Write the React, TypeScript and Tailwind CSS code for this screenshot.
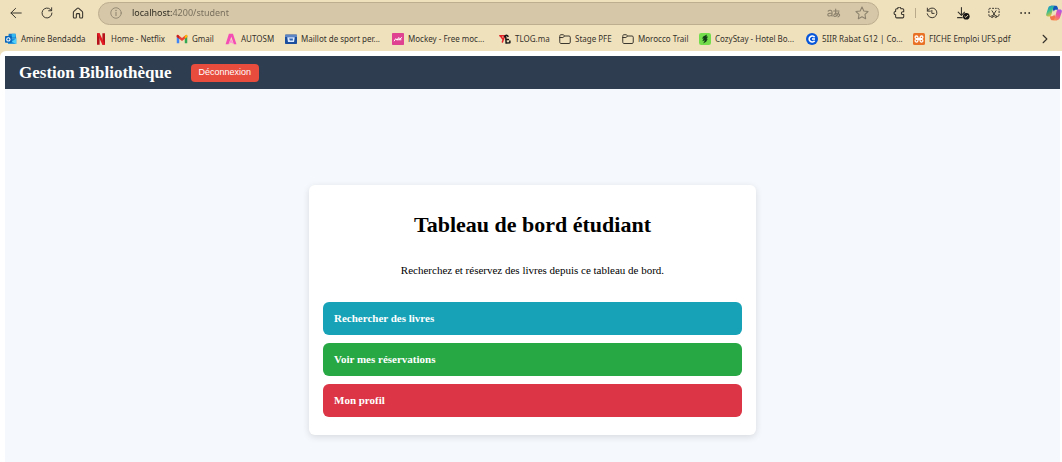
import type { ReactNode } from 'react';

type Bookmark = { label: string; icon: ReactNode; width: string };

const stroke = { fill: 'none', stroke: 'currentColor', strokeLinecap: 'round', strokeLinejoin: 'round' } as const;

function Icon({ children, className = 'size-3', box = 16 }: { children: ReactNode; className?: string; box?: number }) {
  return (
    <svg viewBox={`0 0 ${box} ${box}`} className={`shrink-0 ${className}`} aria-hidden="true">
      {children}
    </svg>
  );
}

const BackIcon = () => (
  <Icon>
    <path {...stroke} strokeWidth="1.3" d="M15 8H1.5M7.5 1.8 1.2 8l6.3 6.2" />
  </Icon>
);

const ReloadIcon = () => (
  <Icon>
    <path {...stroke} strokeWidth="1.3" d="M14.6 8A6.6 6.6 0 1 1 12.8 3.5L14 4.8M14.2 1v4h-4" />
  </Icon>
);

const HomeIcon = () => (
  <Icon>
    <path {...stroke} strokeWidth="1.4" d="M1.8 7.3c0-.6.3-1.1.7-1.5L7 1.8c.6-.5 1.4-.5 2 0l4.5 4c.4.4.7.9.7 1.5v6c0 .8-.5 1.4-1.3 1.4h-1.5c-.7 0-1.2-.5-1.2-1.2V10c0-.7-.5-1.2-1.2-1.2H7c-.7 0-1.2.5-1.2 1.2v3.5c0 .7-.5 1.2-1.2 1.2H3.1c-.8 0-1.3-.6-1.3-1.4z" />
  </Icon>
);

const InfoIcon = () => (
  <Icon>
    <circle {...stroke} strokeWidth="1.1" cx="8" cy="8" r="7" />
    <path {...stroke} strokeWidth="1.3" d="M8 7.2v4.3" />
    <circle cx="8" cy="4.7" r=".9" fill="currentColor" />
  </Icon>
);

const TranslateIcon = () => (
  <svg viewBox="0 0 18 12" className="h-2.5 w-3.5 shrink-0" aria-hidden="true">
    <path {...stroke} strokeWidth="1.4" d="M1.5 3.5C3 2 6.500 2 6.500 5v5M6.500 6C3 6 1 6.500 1 8.300c0 2.200 4 2.300 5.500-.3M8.500 3.500h7M11.200 1c-.4 3-.2 6.500.8 9M15 5c-1 3-3 5.500-5 5.500-2.500 0-1.500-4 2.500-4.200 3.500-.2 5.500 3.200 1.500 4.700" />
  </svg>
);

const StarIcon = () => (
  <Icon className="size-3.5">
    <path {...stroke} strokeWidth="1.2" d="m8 1.200 2.100 4.400 4.800.7-3.500 3.400.8 4.800L8 12.200l-4.200 2.300.8-4.800L1.100 6.300l4.800-.7z" />
  </Icon>
);

const PuzzleIcon = () => (
  <Icon>
    <path {...stroke} strokeWidth="1.4" d="M5 2.200h1.300a2.100 2.100 0 0 1 4.200 0h2.300c.9 0 1.500.6 1.500 1.400v2.700h-1.200a1.900 1.900 0 0 0 0 3.800h1.200v2.900c0 .9-.6 1.500-1.500 1.500H5c-.9 0-1.500-.6-1.500-1.500v-2.700a2.200 2.200 0 0 1 0-4.400V3.700c0-.9.600-1.500 1.500-1.500z" />
  </Icon>
);

const HistoryIcon = () => (
  <Icon>
    <path {...stroke} strokeWidth="1.3" d="M1.800 1.500v4h4M2 5.300A6.500 6.500 0 1 1 1.600 9M7.800 4.500v4h3" />
  </Icon>
);

const DownloadIcon = () => (
  <Icon className="size-3.5" box={18}>
    <path {...stroke} strokeWidth="1.400" d="M7 2v9.500M2.800 7.800 7 12l4-4M2 15h6" />
    <circle cx="13.200" cy="13.200" r="4.300" fill="#161412" />
    <path {...stroke} stroke="#f0e1bd" strokeWidth="1.200" d="m11.200 13.300 1.400 1.400 2.600-2.800" />
  </Icon>
);

const CaptureIcon = () => (
  <Icon>
    <path {...stroke} strokeWidth="1.300" d="M3 12.500H2.500C1.700 12.500 1.200 12 1.200 11v-.8M1.200 7.500v-2M1.200 3.300c0-1 .5-1.500 1.300-1.500h.7M6 1.800h1.500M10 1.800h1M13.200 1.800c1 0 1.600.6 1.600 1.500M14.800 5.500v2M14.800 10c0 1.500-.5 2.500-1.600 2.500M5.300 5l4.200 6.500M10.700 5l-4.200 6.500" />
    <circle {...stroke} strokeWidth="1.100" cx="5.500" cy="12.800" r="1.400" />
    <circle {...stroke} strokeWidth="1.100" cx="10.500" cy="12.800" r="1.400" />
  </Icon>
);

const MoreIcon = () => (
  <Icon>
    <circle cx="2.800" cy="8" r="1.200" fill="currentColor" />
    <circle cx="8.200" cy="8" r="1.200" fill="currentColor" />
    <circle cx="13.600" cy="8" r="1.200" fill="currentColor" />
  </Icon>
);

const CopilotIcon = () => (
  <Icon className="size-4" box={20}>
    <defs>
      <linearGradient id="copilot-left" x1="0" y1="0" x2=".5" y2="1">
        <stop offset="0" stopColor="#1686df" />
        <stop offset=".5" stopColor="#35bd91" />
        <stop offset="1" stopColor="#f2c230" />
      </linearGradient>
      <linearGradient id="copilot-right" x1=".8" y1="0" x2=".3" y2="1">
        <stop offset="0" stopColor="#a656ee" />
        <stop offset=".5" stopColor="#ed55a0" />
        <stop offset="1" stopColor="#fb9350" />
      </linearGradient>
    </defs>
    <path fill="#1553bd" d="M6 1h6c1.500 0 2.200.8 2.600 2.200L15.300 6h-3c-1.300 0-2 .6-2.400 2z" />
    <path fill="#f47548" d="M14 19H8c-1.500 0-2.200-.8-2.600-2.200L4.700 14h3c1.300 0 2-.6 2.400-2z" />
    <path fill="url(#copilot-left)" d="M6.500 1h5C10 1 9.500 2.500 9 4L6.800 12c-.4 1.500-1.200 2.300-2.800 2.300H2.500C.5 14.300-.2 13 .4 11L2.600 4C3.200 2 4.500 1 6.500 1z" />
    <path fill="url(#copilot-right)" d="M13.500 19h-5c1.500 0 2-1.500 2.500-3l2.200-8c.4-1.500 1.200-2.300 2.800-2.300h1.500c2 0 2.700 1.300 2.100 3.300L17.400 16c-.6 2-1.900 3-3.900 3z" />
  </Icon>
);

const FolderIcon = () => (
  <Icon>
    <path {...stroke} strokeWidth="1.300" d="M1 4c0-1 .6-1.700 1.600-1.700h3L7.500 4h5.900c1 0 1.600.7 1.600 1.600v6.700c0 1-.6 1.700-1.600 1.700H2.600C1.600 14 1 13.300 1 12.300zM1 6h4.200l2.300-2" />
  </Icon>
);

const OutlookIcon = () => (
  <Icon>
    <path fill="#1479cb" d="M5 1h9l1 6H4z" />
    <path fill="#35b9f1" d="M9 1h5v5H9z" />
    <path fill="#1590df" d="M4 7h11v7.500H4z" />
    <path fill="#50d0fa" d="m15 7-6 4.500 5.500 3h.5z" />
    <rect x="0" y="4" width="9" height="9" rx="1" fill="#0864b8" />
    <circle cx="4.500" cy="8.500" r="2.200" fill="none" stroke="#fff" strokeWidth="1.400" />
  </Icon>
);

const NetflixIcon = () => (
  <svg viewBox="0 0 11 16" className="mr-0.5 h-3 w-2 shrink-0" aria-hidden="true">
    <path fill="#b5121b" d="M0 0h3.600v16H0zM7.400 0H11v16H7.400z" />
    <path fill="#e51b24" d="M0 0h3.600L11 16H7.400z" />
  </svg>
);

const GmailIcon = () => (
  <Icon>
    <path fill="#4285f4" d="M1 4v9.500h3.300V6.800z" />
    <path fill="#34a853" d="M15 4v9.500h-3.300V6.800z" />
    <path fill="#ea4335" d="m1 3 1.500-.7L8 6.600l5.500-4.300L15 3v2.200l-7 5.500-7-5.500z" />
    <path fill="#fbbc04" d="m11.700 4 1.800-1.700L15 3v2.200l-3.300 2.600z" />
    <path fill="#c5221f" d="m1 5.200 3.300 2.600V4L2.500 2.300 1 3z" />
  </Icon>
);

const AutosmIcon = () => (
  <Icon>
    <path fill="#f44eb5" d="M5.200 1h5.400l4.700 14h-3.500L8.500 5 4.700 15H.8z" />
    <path fill="#ff8ed4" d="m8 8 3.800 7L8 12.500 4.700 15z" />
  </Icon>
);

const JerseyIcon = () => (
  <Icon>
    <rect x="0" y="2" width="16" height="12.500" rx="1" fill="#1c4e9e" />
    <path fill="#7197d2" d="M0 3h16v2H0z" />
    <path fill="#dbe9ff" d="M3 5.500h10L12 12H4z" />
    <path fill="#2f65b1" d="M5.500 7.300h5V10h-4z" />
  </Icon>
);

const MockeyIcon = () => (
  <Icon>
    <rect width="16" height="16" rx="1" fill="#df4291" />
    <path {...stroke} stroke="#fff" strokeWidth="1.300" d="M3 10.500 5 7.500l1.500 2L9 6l1 2.500L13 6M7 9h5" />
  </Icon>
);

const TlogIcon = () => (
  <Icon>
    <path {...stroke} stroke="#e32227" strokeWidth="2" d="M1 3.500h6.500M2 4l3 4M7.500 4l-3 8" />
    <path {...stroke} stroke="#181818" strokeWidth="2" d="M7.500 5C8 2.500 11 2 12 4.500M9 5l.5 8.500 5-.5v-2.500M9.500 8.500h3" />
  </Icon>
);

const CozyIcon = () => (
  <Icon>
    <rect width="16" height="16" rx="3" fill="#73dd4c" />
    <path fill="#123b17" d="m10.500 2-5.300 3-.8 3 2-1-2 4L8 9.500 5.500 14l4-2.500 2.300-3.800-1.800.5L12 4.500l-2 .5z" />
  </Icon>
);

const CourseIcon = () => (
  <Icon>
    <circle cx="8" cy="8" r="8" fill="#0755d8" />
    <path fill="none" stroke="#fff" strokeWidth="2.200" d="M11.500 5.700a4 4 0 1 0 0 4.600M8 8h4" />
  </Icon>
);

const XamppIcon = () => (
  <Icon>
    <rect width="16" height="16" rx="2" fill="#e97126" />
    <path {...stroke} stroke="#fff" strokeWidth="1.700" d="M4.500 3.800c-2.300.3-2.300 3.200 0 3.600h7c2.300-.4 2.300-3.300 0-3.600-1.800 0-2.300 1.700-2.300 4.200s.5 4.200 2.300 4.200c2.300-.3 2.300-3.200 0-3.600h-7c-2.300.4-2.300 3.300 0 3.600 1.800 0 2.300-1.700 2.300-4.200s-.5-4.200-2.300-4.200z" />
  </Icon>
);

const bookmarks: Bookmark[] = [
  { label: 'Amine Bendadda', icon: <OutlookIcon />, width: 'w-[92px]' },
  { label: 'Home - Netflix', icon: <NetflixIcon />, width: 'w-[79px]' },
  { label: 'Gmail', icon: <GmailIcon />, width: 'w-[49px]' },
  { label: 'AUTOSM', icon: <AutosmIcon />, width: 'w-[60px]' },
  { label: 'Maillot de sport per...', icon: <JerseyIcon />, width: 'w-[107px]' },
  { label: 'Mockey - Free moc...', icon: <MockeyIcon />, width: 'w-[107px]' },
  { label: 'TLOG.ma', icon: <TlogIcon />, width: 'w-[60px]' },
  { label: 'Stage PFE', icon: <FolderIcon />, width: 'w-[63px]' },
  { label: 'Morocco Trail', icon: <FolderIcon />, width: 'w-[77px]' },
  { label: 'CozyStay - Hotel Bo...', icon: <CozyIcon />, width: 'w-[107px]' },
  { label: '5IIR Rabat G12 | Co...', icon: <CourseIcon />, width: 'w-[107px]' },
  { label: 'FICHE Emploi UFS.pdf', icon: <XamppIcon />, width: 'w-[107px]' },
];

const actions = [
  { label: 'Rechercher des livres', color: 'bg-[#17a2b8]' },
  { label: 'Voir mes réservations', color: 'bg-[#28a745]' },
  { label: 'Mon profil', color: 'bg-[#dc3545]' },
];

function ToolButton({ label, children }: { label: string; children: ReactNode }) {
  return (
    <button type="button" aria-label={label} className="flex w-4 shrink-0 items-center justify-center">
      {children}
    </button>
  );
}

function BrowserBar() {
  return (
    <header className="bg-[#f0e1bd] font-['Noto_Sans',sans-serif] text-[#35322b]">
      <div className="flex h-[26px] items-center overflow-hidden pl-2">
        <div className="flex gap-[15px] pr-3">
          <ToolButton label="Précédent"><BackIcon /></ToolButton>
          <ToolButton label="Actualiser"><ReloadIcon /></ToolButton>
          <ToolButton label="Accueil"><HomeIcon /></ToolButton>
        </div>
        <div className="flex h-[23px] flex-1 items-center rounded-full border border-[#bcae8f] bg-[#d5c7a8] pl-[11px] pr-2 text-[#8b816c]">
          <InfoIcon />
          <input
            aria-label="Adresse"
            defaultValue="localhost:4200/student"
            className="ml-2.5 min-w-0 flex-1 bg-[linear-gradient(to_right,#2b281f_40px,#746b59_40px)] bg-clip-text text-[9px] text-transparent outline-none"
          />
          <div className="flex gap-3">
            <ToolButton label="Traduire"><TranslateIcon /></ToolButton>
            <ToolButton label="Ajouter aux favoris"><StarIcon /></ToolButton>
          </div>
        </div>
        <div className="ml-3 flex items-center">
          <ToolButton label="Extensions"><PuzzleIcon /></ToolButton>
          <span className="mx-2 h-2.5 w-px bg-[#b8aa8a]" />
          <div className="flex items-center gap-[15px]">
            <ToolButton label="Historique"><HistoryIcon /></ToolButton>
            <ToolButton label="Téléchargements"><DownloadIcon /></ToolButton>
            <ToolButton label="Capture d'écran"><CaptureIcon /></ToolButton>
            <ToolButton label="Paramètres"><MoreIcon /></ToolButton>
            <div className="-ml-0.5 flex">
              <ToolButton label="Copilot"><CopilotIcon /></ToolButton>
            </div>
          </div>
        </div>
      </div>
      <nav aria-label="Favoris" className="flex h-[25px] items-center pl-[5px] pr-3">
        {bookmarks.map(({ label, icon, width }) => (
          <a key={label} href="#" className={`flex shrink-0 items-center gap-1 whitespace-nowrap text-[8px] ${width}`}>
            {icon}
            {label}
          </a>
        ))}
        <button type="button" aria-label="Autres favoris" className="ml-auto">
          <Icon className="size-2.5">
            <path {...stroke} strokeWidth="1.800" d="m5 2 6 6-6 6" />
          </Icon>
        </button>
      </nav>
    </header>
  );
}

export default function App() {
  return (
    <div className="flex min-h-screen flex-col bg-[#f0e1bd]">
      <BrowserBar />
      <div className="flex flex-1 flex-col rounded-tl-md bg-white pl-[5px] pr-0.5 pt-[5px] font-['Liberation_Serif',serif]">
        <div className="flex h-[33px] items-center gap-[19px] bg-[#2e3e50] pl-3.5">
          <h2 className="text-[17px] font-bold text-white">Gestion Bibliothèque</h2>
          <button type="button" className="h-[18px] rounded bg-[#e74c3c] px-2 font-['Liberation_Sans',sans-serif] text-[9px] text-white">
            Déconnexion
          </button>
        </div>
        <main className="flex flex-1 flex-col items-center bg-[#f5f8fc] px-4 pb-[27px] pt-24">
          <section className="w-full max-w-[447px] rounded-md bg-white px-3.5 pb-[18px] pt-6 text-center shadow-[0_2px_7px_rgba(0,0,0,0.12)]">
            <h1 className="text-[22px] font-bold leading-8 text-black">Tableau de bord étudiant</h1>
            <p className="mt-[21px] text-[11px] leading-4 text-black">Recherchez et réservez des livres depuis ce tableau de bord.</p>
            <ul className="mt-6 flex flex-col gap-2 text-left">
              {actions.map(({ label, color }) => (
                <li key={label}>
                  <a href="#" className={`flex h-[33px] items-center rounded-md px-[11px] text-[11px] font-bold text-white ${color}`}>
                    {label}
                  </a>
                </li>
              ))}
            </ul>
          </section>
        </main>
      </div>
    </div>
  );
}
